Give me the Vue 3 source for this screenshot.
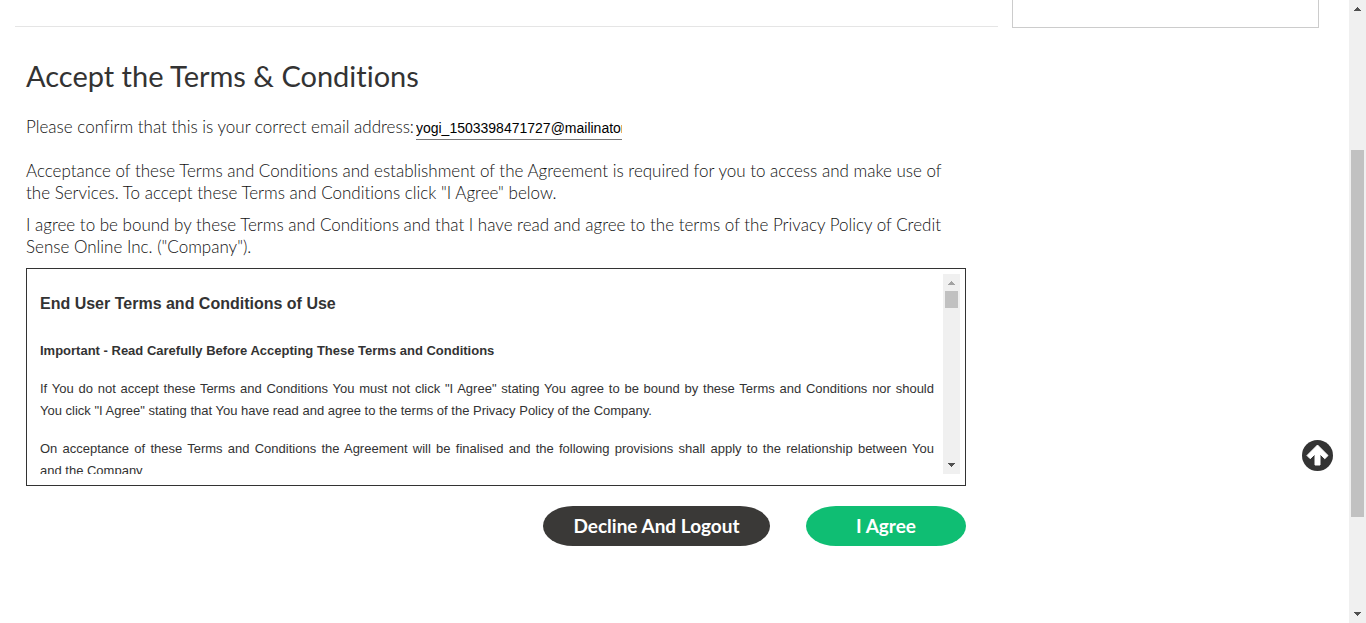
<script setup>
import { ref } from 'vue'

const email = ref('yogi_1503398471727@mailinator.com')
</script>

<template>
  <div class="page">
    <div class="content">
      <main class="main">
        <section class="terms">
          <h1>Accept the Terms &amp; Conditions</h1>
          <div class="email-row">
            <label for="email">Please confirm that this is your correct email address:</label>
            <input id="email" v-model="email" type="text" />
          </div>
          <p>
            Acceptance of these Terms and Conditions and establishment of the Agreement is required for you to access and make use of
            the Services. To accept these Terms and Conditions click "I Agree" below.
          </p>
          <p>
            I agree to be bound by these Terms and Conditions and that I have read and agree to the terms of the Privacy Policy of Credit
            Sense Online Inc. ("Company").
          </p>
          <div class="agreement">
            <div class="agreement-text">
              <h2>End User Terms and Conditions of Use</h2>
              <h3>Important - Read Carefully Before Accepting These Terms and Conditions</h3>
              <p>
                If You do not accept these Terms and Conditions You must not click "I Agree" stating You agree to be bound by these Terms and Conditions nor should
                You&nbsp;click "I Agree" stating that You have read and agree to the terms of the Privacy Policy of the Company.
              </p>
              <p>
                On acceptance of these Terms and Conditions the Agreement will be finalised and the following provisions shall apply to the relationship between You
                and&nbsp;the&nbsp;Company
              </p>
            </div>
            <div class="scrollbar" aria-hidden="true">
              <svg class="arrow muted" viewBox="0 0 17 17"><path d="M8 7h1v1h1v1h1v1h1v1H5v-1h1V9h1V8h1z" /></svg>
              <div class="track"><div class="thumb inner-thumb"></div></div>
              <svg class="arrow" viewBox="0 0 17 17"><path d="M5 6h7v1h-1v1h-1v1H9v1H8V9H7V8H6V7H5z" /></svg>
            </div>
          </div>
          <div class="actions">
            <button type="button" class="decline">Decline And Logout</button>
            <button type="button" class="agree">I Agree</button>
          </div>
        </section>
      </main>
      <aside class="panel"></aside>
    </div>
    <div class="scrollbar" aria-hidden="true">
      <svg class="arrow" viewBox="0 0 17 17"><path d="M8 7h1v1h1v1h1v1h1v1H5v-1h1V9h1V8h1z" /></svg>
      <div class="track page-track"><div class="thumb page-thumb"></div></div>
      <svg class="arrow" viewBox="0 0 17 17"><path d="M5 6h7v1h-1v1h-1v1H9v1H8V9H7V8H6V7H5z" /></svg>
    </div>
    <a class="to-top" href="#" aria-label="Back to top">
      <svg viewBox="0 0 31 31">
        <circle cx="15.500" cy="15.500" r="15.500" fill="#333" />
        <path d="M15.500 5 26 15.500 22.800 18.700 18 14V25H13V14L8.200 18.700 5 15.500Z" fill="#fff" stroke="#fff" stroke-width="1" stroke-linejoin="round" />
      </svg>
    </a>
  </div>
</template>

<style>
body {
  background: #fff;
}
</style>

<style scoped>
* {
  box-sizing: border-box;
}
.page {
  display: flex;
  min-height: 100vh;
  color: #333;
  font-family: Lato, "Open Sans", sans-serif;
  font-variant-ligatures: none;
}
.content {
  flex: 1;
  min-width: 0;
  display: grid;
  grid-template-columns: minmax(0, 1fr) 307px;
  gap: 14px;
  align-items: start;
  padding: 0 30px 0 15px;
}
.main {
  padding-top: 26px;
}
.terms {
  border-top: 1px solid #e5e5e5;
  padding: 31px 32px 0 11px;
}
.panel {
  height: 28px;
  border: 1px solid #ccc;
  border-top: 0;
}
h1 {
  margin: 0 0 22px;
  font-size: 29px;
  line-height: 36px;
  font-weight: 400;
}
.email-row {
  display: flex;
  align-items: flex-start;
  gap: 2px;
  margin-bottom: 20px;
  color: #111;
  font-size: 17px;
  font-weight: 300;
  line-height: 22px;
}
.email-row input {
  width: 206px;
  height: 24px;
  padding: 0;
  border: 0;
  border-bottom: 1px solid #777;
  background: transparent;
  color: #000;
  font: 14px "Liberation Sans", Arial, sans-serif;
}
p {
  margin: 0 0 10px;
  color: #111;
  font-size: 17px;
  font-weight: 300;
  line-height: 22px;
}
.agreement {
  display: flex;
  border: 1px solid #333;
  padding: 5px 5px 11px 13px;
}
.agreement-text {
  flex: 1;
  min-width: 0;
  height: 200px;
  overflow: hidden;
  padding-right: 9px;
  font-family: "Liberation Sans", Arial, sans-serif;
}
h2 {
  margin: 19px 0 25px;
  font-size: 16px;
  line-height: 22px;
}
h3 {
  margin: 0 0 16px;
  font-size: 13px;
  line-height: 22px;
}
.agreement p {
  margin-bottom: 16px;
  color: #333;
  font-size: 13px;
  font-weight: 400;
  text-align: justify;
}
.scrollbar {
  display: flex;
  flex-direction: column;
  flex: none;
  width: 17px;
  background: #f0f0f0;
}
.arrow {
  width: 17px;
  height: 17px;
  flex: none;
  fill: #505050;
  shape-rendering: crispEdges;
}
.muted {
  fill: #a3a3a3;
}
.track {
  flex: 1;
  padding: 0 2px;
}
.thumb {
  background: #c1c1c1;
}
.inner-thumb {
  height: 17px;
}
.page-track {
  padding-top: 133px;
}
.page-thumb {
  height: 367px;
}
.actions {
  display: flex;
  justify-content: flex-end;
  gap: 36px;
  margin-top: 20px;
}
button {
  height: 40px;
  padding: 0 0 2px;
  border: 0;
  border-radius: 30px / 20px;
  color: #fff;
  font-family: inherit;
  font-size: 19px;
  font-weight: 700;
  cursor: pointer;
}
.decline {
  width: 227px;
  background: #3a3937;
}
.agree {
  width: 160px;
  background: #0fbe73;
}
.to-top {
  position: fixed;
  right: 33px;
  bottom: 152px;
  width: 31px;
  height: 31px;
}
.to-top svg {
  display: block;
}
</style>
